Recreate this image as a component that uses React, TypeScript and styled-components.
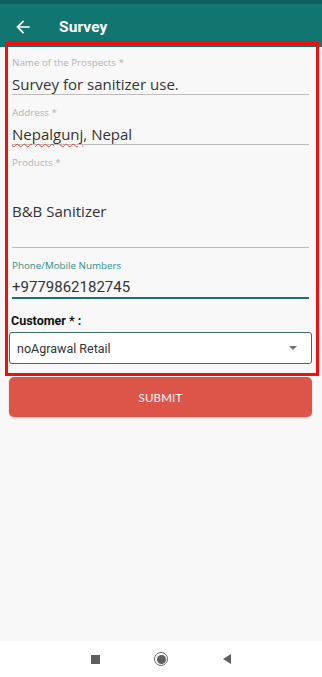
import styled, { createGlobalStyle } from 'styled-components';

const GlobalStyle = createGlobalStyle`
  html, body {
    margin: 0;
    padding: 0;
    background: #f8f8f8;
  }
  * {
    box-sizing: border-box;
  }
`;

const Screen = styled.div`
  width: 322px;
  height: 677px;
  display: flex;
  flex-direction: column;
  background: #f8f8f8;
  overflow: hidden;
`;

const StatusStrip = styled.div`
  height: 4px;
  background: #0d605c;
`;

const AppBar = styled.div`
  height: 43px;
  display: flex;
  align-items: center;
  padding: 3px 0 0 13px;
  background: #117570;
  color: #fff;
`;

const BackButton = styled.div`
  width: 20px;
  height: 20px;
  display: flex;
  margin-right: 26px;
`;

const Title = styled.h1`
  margin: 0;
  font-family: Roboto, 'Liberation Sans', sans-serif;
  font-size: 15.5px;
  font-weight: 700;
  letter-spacing: 0.1px;
`;

const Content = styled.main`
  flex: 1;
  display: flex;
  flex-direction: column;
  padding: 0 10px 0 5px;
`;

const HighlightBox = styled.section`
  margin-top: -5px;
  width: 314px;
  border: 3px solid #f40d0d;
  padding: 0 4px 9px 0;
  display: flex;
  flex-direction: column;
  position: relative;
  z-index: 1;
`;

const Field = styled.div<{ $active?: boolean }>`
  margin-left: 4px;
  margin-right: 3px;
  padding-top: 12px;
  border-bottom: ${(p) => (p.$active ? '2px solid #1e6f6b' : '1px solid #bdbdbd')};
`;

const Label = styled.div<{ $active?: boolean }>`
  font-family: 'Open Sans', 'Liberation Sans', sans-serif;
  font-size: 9.8px;
  line-height: 12px;
  color: ${(p) => (p.$active ? '#2f8e87' : '#b3b3b3')};
`;

const Value = styled.div<{ $tall?: boolean; $numeric?: boolean }>`
  margin-top: 5px;
  height: ${(p) => (p.$tall ? '73px' : '20px')};
  display: flex;
  align-items: center;
  font-family: ${(p) =>
    p.$numeric ? "Roboto, 'Liberation Sans', sans-serif" : "'Open Sans', 'Liberation Sans', sans-serif"};
  font-size: 15px;
  line-height: 20px;
  color: #333;
`;

const Misspelt = styled.span`
  text-decoration: underline wavy #e0443a;
  text-decoration-thickness: 1px;
  text-underline-offset: 3px;
`;

const SectionLabel = styled.div`
  margin: 14px 0 0 3px;
  font-family: Roboto, 'Liberation Sans', sans-serif;
  font-size: 12.5px;
  font-weight: 700;
  line-height: 16px;
  color: #111;
`;

const Select = styled.div`
  margin: 3px 0 0 1px;
  height: 32px;
  display: flex;
  align-items: center;
  justify-content: space-between;
  padding: 0 14px 0 7px;
  background: #fff;
  border: 1px solid #3f6a67;
  border-radius: 3px;
  font-family: Roboto, 'Liberation Sans', sans-serif;
  font-size: 12.5px;
  color: #333;
`;

const Caret = styled.span`
  width: 0;
  height: 0;
  border-left: 4px solid transparent;
  border-right: 4px solid transparent;
  border-top: 4px solid #6f6f6f;
`;

const SubmitButton = styled.button`
  margin: 1px 0 0 4px;
  width: 303px;
  height: 40px;
  border: none;
  border-radius: 5px;
  background: #dd5449;
  color: #fff;
  font-family: Lato, 'Liberation Sans', sans-serif;
  font-size: 11.5px;
  letter-spacing: 0.2px;
  box-shadow: 0 1px 2px rgba(0, 0, 0, 0.2);
`;

const NavBar = styled.nav`
  height: 36px;
  display: flex;
  align-items: center;
  justify-content: center;
  gap: 50px;
  background: #fff;
`;

const NavSlot = styled.div`
  width: 16px;
  height: 16px;
  display: flex;
  align-items: center;
  justify-content: center;
`;

const RecentIcon = styled.span`
  width: 9px;
  height: 9px;
  background: #5e5e5e;
`;

const HomeIcon = styled.span`
  width: 14px;
  height: 14px;
  border-radius: 50%;
  border: 1.5px solid #666;
  display: flex;
  align-items: center;
  justify-content: center;
  &::after {
    content: '';
    width: 9px;
    height: 9px;
    border-radius: 50%;
    background: #5e5e5e;
  }
`;

const BackIcon = styled.span`
  width: 0;
  height: 0;
  border-top: 5px solid transparent;
  border-bottom: 5px solid transparent;
  border-right: 8px solid #5e5e5e;
`;

const App = () => {
  return (
    <>
      <GlobalStyle />
      <Screen>
        <StatusStrip />
        <AppBar>
          <BackButton>
            <svg width="20" height="20" viewBox="0 0 24 24">
              <path
                d="M20 11H7.83l5.59-5.59L12 4l-8 8 8 8 1.41-1.41L7.83 13H20v-2z"
                fill="#fff"
              />
            </svg>
          </BackButton>
          <Title>Survey</Title>
        </AppBar>
        <Content>
          <HighlightBox>
            <Field>
              <Label>Name of the Prospects *</Label>
              <Value>Survey for sanitizer use.</Value>
            </Field>
            <Field>
              <Label>Address *</Label>
              <Value>
                <Misspelt>Nepalgunj</Misspelt>, Nepal
              </Value>
            </Field>
            <Field>
              <Label>Products *</Label>
              <Value $tall>B&amp;B Sanitizer</Value>
            </Field>
            <Field $active>
              <Label $active>Phone/Mobile Numbers</Label>
              <Value $numeric>+9779862182745</Value>
            </Field>
            <SectionLabel>Customer * :</SectionLabel>
            <Select>
              <span>noAgrawal Retail</span>
              <Caret />
            </Select>
          </HighlightBox>
          <SubmitButton>SUBMIT</SubmitButton>
        </Content>
        <NavBar>
          <NavSlot>
            <RecentIcon />
          </NavSlot>
          <NavSlot>
            <HomeIcon />
          </NavSlot>
          <NavSlot>
            <BackIcon />
          </NavSlot>
        </NavBar>
      </Screen>
    </>
  );
};

export default App;
